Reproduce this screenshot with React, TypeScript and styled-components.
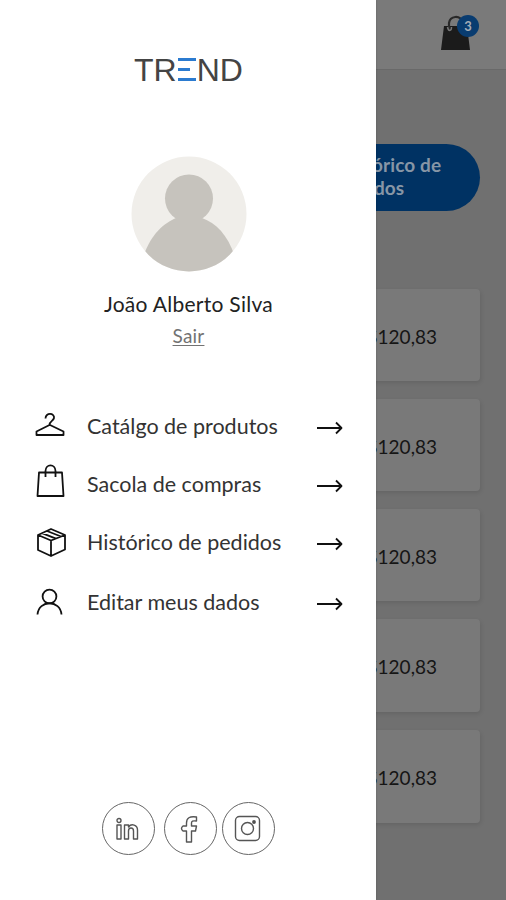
import React from "react";
import styled, { createGlobalStyle } from "styled-components";

const GlobalStyle = createGlobalStyle`
  * { box-sizing: border-box; }
  body { margin: 0; font-family: Lato, "Open Sans", sans-serif; background: #707070; }
  button, a { font: inherit; color: inherit; }
  svg { display: block; overflow: visible; }
`;

const Screen = styled.div`
  position: relative;
  width: 100%;
  height: 900px;
  overflow: hidden;
  background: #707070;
`;

const Page = styled.div`
  display: flex;
  flex-direction: column;
`;

const Header = styled.header`
  height: 70px;
  flex: none;
  display: flex;
  justify-content: flex-end;
  padding: 14px 27px 0 0;
  background: #7a7a7a;
  border-bottom: 1px solid #696969;
`;

const Cart = styled.div`
  position: relative;
  width: 39px;
  height: 38px;
`;

const Badge = styled.span`
  position: absolute;
  top: 1px;
  right: 0;
  width: 22px;
  height: 22px;
  border-radius: 50%;
  background: #093c70;
  color: #a3abb5;
  font: 700 13px/23px Lato, sans-serif;
  text-align: center;
`;

const PillRow = styled.div`
  display: flex;
  justify-content: flex-end;
  padding: 74px 26px 0 0;
`;

const Pill = styled.button`
  width: 218px;
  height: 67px;
  border: 0;
  padding: 0 0 3px 75px;
  border-radius: 34px;
  background: #003263;
  color: #8796a6;
  font-size: 19px;
  font-weight: 700;
  line-height: 23px;
  letter-spacing: 0.1px;
  text-align: left;
`;

const Orders = styled.section`
  display: grid;
  grid-template-rows: 92px 92px 92px 93px 93px;
  row-gap: 18px;
  padding: 78px 26px 0;
`;

const OrderCard = styled.article`
  display: flex;
  align-items: center;
  justify-content: flex-end;
  padding: 2px 43px 0 0;
  border-radius: 4px;
  background: #797979;
  box-shadow: 1px 2px 4px rgba(0, 0, 0, 0.1);
  color: #151515;
  font-size: 19px;
`;

const Drawer = styled.aside`
  position: absolute;
  inset: 0 auto 0 0;
  width: 376px;
  display: flex;
  flex-direction: column;
  align-items: center;
  background: #fff;
  box-shadow: 0 0 2px rgba(0, 0, 0, 0.2);
`;

const Logo = styled.h1`
  display: flex;
  height: 32px;
  margin: 54px 0 0 1px;
  color: #444;
  font: 400 32px/32px "Liberation Sans", Arial, sans-serif;
`;

const LogoBars = styled.span`
  width: 18px;
  height: 23px;
  margin: 4px 1px 0;
  display: flex;
  flex-direction: column;
  justify-content: space-between;
`;

const LogoBar = styled.i<{ $short?: boolean }>`
  height: 3px;
  width: ${({ $short }) => ($short ? "12px" : "18px")};
  background: #2b7bd0;
`;

const Avatar = styled.svg`
  flex: none;
  margin: 70px 0 0 1px;
`;

const UserName = styled.p`
  margin: 18px 0 0 1px;
  height: 28px;
  color: #222;
  font-size: 21px;
  line-height: 28px;
  letter-spacing: 0.28px;
`;

const Logout = styled.a`
  height: 26px;
  margin: 5px 0 0 1px;
  color: #727272;
  font-size: 19px;
  line-height: 26px;
  letter-spacing: 0.2px;
  text-decoration: underline;
  text-decoration-thickness: 1px;
  text-underline-offset: 2px;
`;

const Menu = styled.nav`
  align-self: stretch;
  display: grid;
  grid-template-rows: 58px 58px 59px 61px;
  margin-top: 47px;
  padding: 0 32px 0 34px;
`;

const MenuItem = styled.a`
  display: grid;
  grid-template-columns: 53px 1fr 28px;
  align-items: center;
  color: #333;
  font-size: 21.5px;
  white-space: nowrap;
`;

const MenuLabel = styled.span`
  line-height: 26px;
  padding-top: 1px;
`;

const Socials = styled.footer`
  display: flex;
  margin: 170px 0 0;
`;

const Social = styled.a<{ $gap?: number }>`
  width: 53px;
  height: 53px;
  margin-left: ${({ $gap = 0 }) => $gap}px;
  display: grid;
  place-items: center;
  border: 1.5px solid #666;
  border-radius: 50%;
`;

const Line = styled.svg`
  fill: none;
  stroke: #111;
  stroke-width: 1.8;
  stroke-linejoin: round;
`;

const Hanger = () => (
  <Line width="32" height="32" viewBox="0 0 32 32">
    <path d="M11.500 9.500C11.500 3 21 4 20 9c-.6 3-4.500 3-4.500 7L2.500 22.500v3.500h27v-3.500L16 16" />
  </Line>
);
const Bag = () => (
  <Line width="32" height="34" viewBox="0 3 32 34">
    <path d="M5 9.500H28L29.500 33H3.500zM11.500 14V8c0-7.500 10-7.500 10 0v6" />
  </Line>
);
const Box = () => (
  <Line width="32" height="32" viewBox="0 0 32 32">
    <path d="M17 3 31 9v14.500L17 30 4 24V9zM4 9l13 5.500L31 9M17 14.500V30M8 7.200l14 5.500M13 5l14 5.500" />
  </Line>
);
const Person = () => (
  <Line width="32" height="32" viewBox="0.500 0 32 32">
    <circle cx="16" cy="10.500" r="6.900" />
    <path d="M4 28.500c1-15 23-15 24 0" />
  </Line>
);

const ArrowLine = styled(Line)<{ $drop: number }>`
  margin-top: ${({ $drop }) => $drop}px;
`;
const Arrow = ({ drop }: { drop: number }) => (
  <ArrowLine $drop={drop} width="28" height="16" viewBox="0 0 28 16">
    <path d="M1 9h25M20 3.500l5.500 5.500L20 14.500" />
  </ArrowLine>
);

const menuItems = [
  { label: "Catálgo de produtos", Icon: Hanger, drop: 3 },
  { label: "Sacola de compras", Icon: Bag, drop: 4 },
  { label: "Histórico de pedidos", Icon: Box, drop: 3 },
  { label: "Editar meus dados", Icon: Person, drop: 3 },
];

const SocialIcon = styled(Line)`
  stroke: #555;
  stroke-width: 1.4;
`;

const prices = [1, 2, 3, 4, 5];

export default function App() {
  return (
    <>
      <GlobalStyle />
      <Screen>
        <Page>
          <Header>
            <Cart>
              <svg width="39" height="38" viewBox="0 0 39 38">
                <path d="M4 12H27L30 36H1z" fill="#1b1b1b" />
                <path d="M9 17v-8c1-7 11-9 14 0" fill="none" stroke="#292929" strokeWidth="2.2" />
                <path d="M7.500 13c1 5 4 4 4 0" fill="none" stroke="#777" strokeWidth="1.5" />
              </svg>
              <Badge>3</Badge>
            </Cart>
          </Header>
          <PillRow>
            <Pill>Histórico de<br />pedidos</Pill>
          </PillRow>
          <Orders>
            {prices.map((n) => <OrderCard key={n}>R$120,83</OrderCard>)}
          </Orders>
        </Page>
        <Drawer>
          <Logo aria-label="TREND">
            TR<LogoBars><LogoBar /><LogoBar $short /><LogoBar /></LogoBars>ND
          </Logo>
          <Avatar width="116" height="116" viewBox="0 0 116 116">
            <defs><clipPath id="avatar"><circle cx="58" cy="58" r="57.500" /></clipPath></defs>
            <g clipPath="url(#avatar)">
              <rect width="116" height="116" fill="#f0eeea" />
              <circle cx="58" cy="42.500" r="24" fill="#c6c3bd" />
              <path d="M12 101C20 78 33 67 45 62h26c14 5 26 17 33 39v15H12z" fill="#c6c3bd" />
            </g>
          </Avatar>
          <UserName>João Alberto Silva</UserName>
          <Logout>Sair</Logout>
          <Menu>
            {menuItems.map(({ label, Icon, drop }) => (
              <MenuItem key={label}><Icon /><MenuLabel>{label}</MenuLabel><Arrow drop={drop} /></MenuItem>
            ))}
          </Menu>
          <Socials>
            <Social aria-label="LinkedIn">
              <SocialIcon width="24" height="24" viewBox="0.500 0 24 24">
                <circle cx="3.500" cy="3.500" r="2" />
                <path d="M1.500 8h4v14h-4zM9 8h4v2c3-4 9-2 9 3v9h-4v-8c0-4-5-4-5 0v8H9z" />
              </SocialIcon>
            </Social>
            <Social aria-label="Facebook" $gap={9}>
              <SocialIcon width="20" height="28" viewBox="0 0 20 28">
                <path d="M6.500 27V16H3q-3-2.500 0-5h3.500V8c0-5 3-7 10-6v4c-4-.500-5 0-5 2v3h5l-1 5h-4v11z" />
              </SocialIcon>
            </Social>
            <Social aria-label="Instagram" $gap={5}>
              <SocialIcon width="26" height="26" viewBox="0.500 0.500 26 26">
                <rect x="1" y="1" width="24" height="24" rx="4" />
                <circle cx="13" cy="13" r="6" />
                <circle cx="19.500" cy="6.500" r="1.200" fill="#333" />
              </SocialIcon>
            </Social>
          </Socials>
        </Drawer>
      </Screen>
    </>
  );
}
